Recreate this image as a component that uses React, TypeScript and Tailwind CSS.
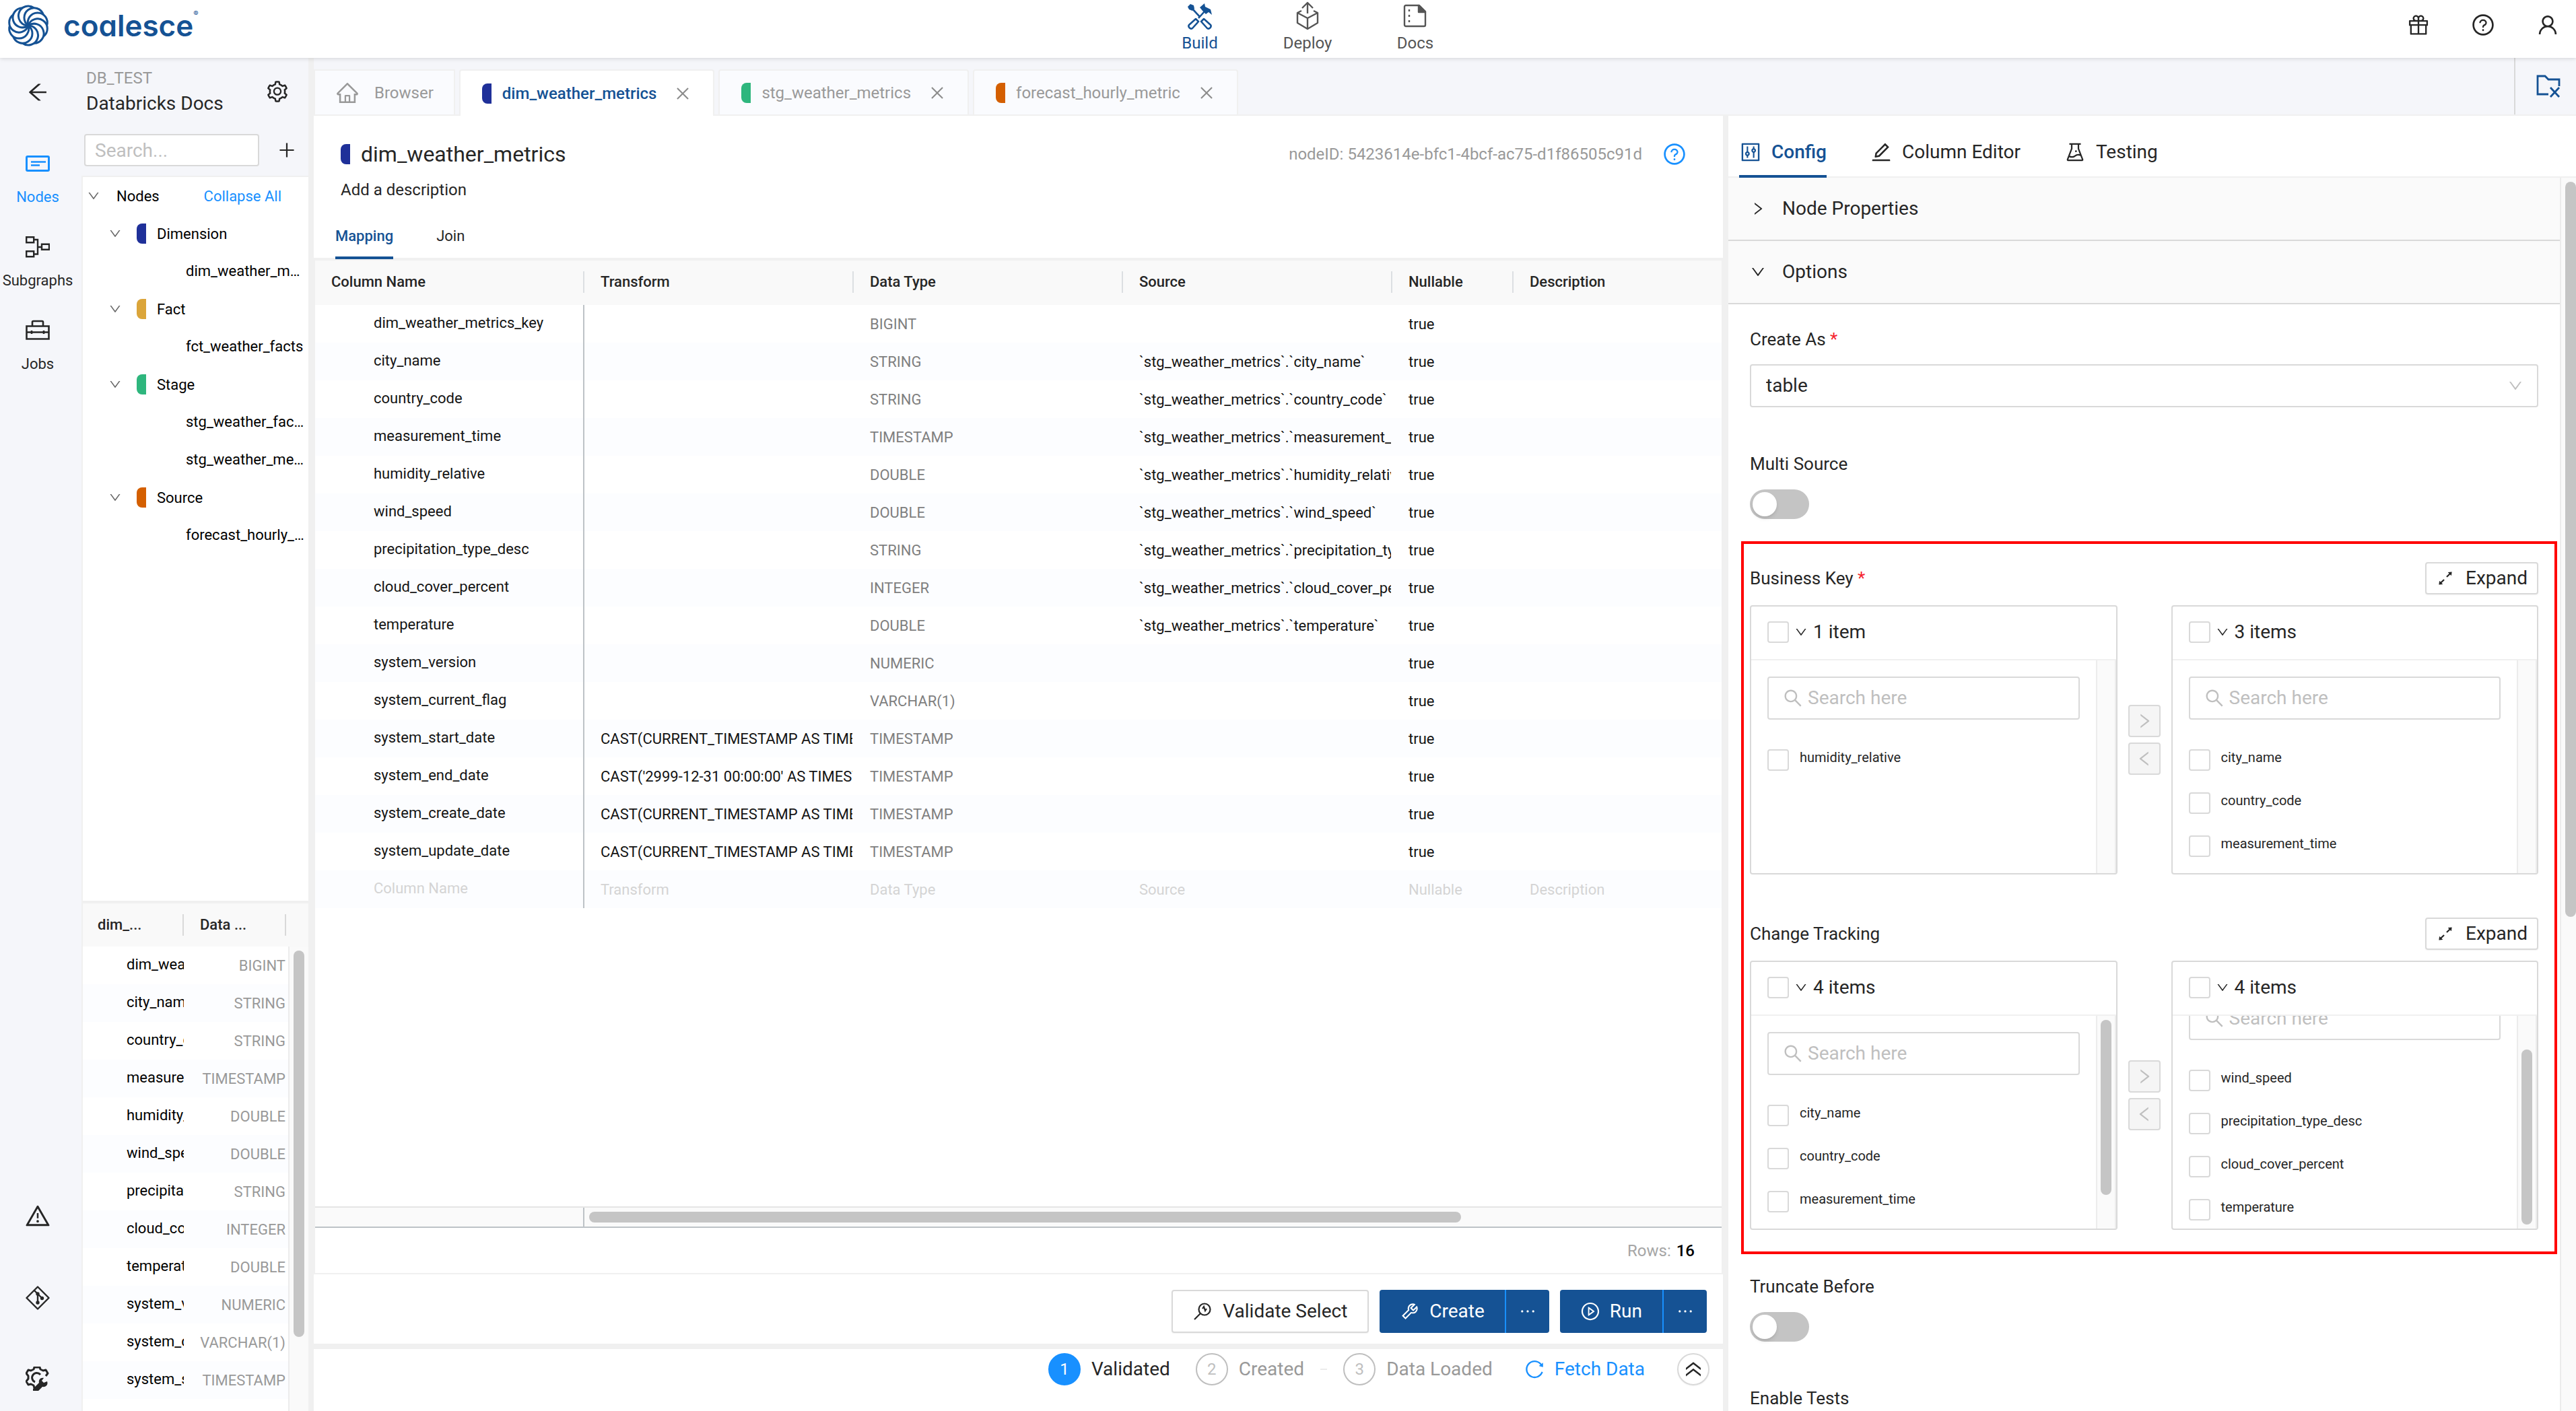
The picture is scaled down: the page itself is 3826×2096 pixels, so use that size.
import { ReactNode } from 'react'
import clsx from 'clsx'
import {
  AiOutlineArrowLeft,
  AiOutlineArrowsAlt,
  AiOutlineClose,
  AiOutlineControl,
  AiOutlineDoubleRight,
  AiOutlineDown,
  AiOutlineEdit,
  AiOutlineEllipsis,
  AiOutlineExperiment,
  AiOutlineGift,
  AiOutlineHome,
  AiOutlineLeft,
  AiOutlinePlayCircle,
  AiOutlinePlus,
  AiOutlineQuestionCircle,
  AiOutlineReload,
  AiOutlineRight,
  AiOutlineSearch,
  AiOutlineSetting,
  AiOutlineTool,
  AiOutlineUser,
  AiOutlineWarning,
} from 'react-icons/ai'

type NodeKind = 'dimension' | 'fact' | 'stage' | 'source'

const chipColors: Record<NodeKind, string> = {
  dimension: 'bg-[#1f3099]',
  fact: 'bg-[#dba53a]',
  stage: 'bg-[#2eb67d]',
  source: 'bg-[#d45f00]',
}

const tree: { kind: NodeKind; label: string; nodes: string[] }[] = [
  { kind: 'dimension', label: 'Dimension', nodes: ['dim_weather_metrics'] },
  { kind: 'fact', label: 'Fact', nodes: ['fct_weather_facts'] },
  { kind: 'stage', label: 'Stage', nodes: ['stg_weather_facts', 'stg_weather_metrics'] },
  { kind: 'source', label: 'Source', nodes: ['forecast_hourly_metric'] },
]

const stg = (name: string) => `\`stg_weather_metrics\`.\`${name}\``
const castNow = 'CAST(CURRENT_TIMESTAMP AS TIMESTAMP)'

const columns = [
  { name: 'dim_weather_metrics_key', type: 'BIGINT' },
  { name: 'city_name', type: 'STRING', source: stg('city_name') },
  { name: 'country_code', type: 'STRING', source: stg('country_code') },
  { name: 'measurement_time', type: 'TIMESTAMP', source: stg('measurement_time') },
  { name: 'humidity_relative', type: 'DOUBLE', source: stg('humidity_relative') },
  { name: 'wind_speed', type: 'DOUBLE', source: stg('wind_speed') },
  { name: 'precipitation_type_desc', type: 'STRING', source: stg('precipitation_type_desc') },
  { name: 'cloud_cover_percent', type: 'INTEGER', source: stg('cloud_cover_percent') },
  { name: 'temperature', type: 'DOUBLE', source: stg('temperature') },
  { name: 'system_version', type: 'NUMERIC' },
  { name: 'system_current_flag', type: 'VARCHAR(1)' },
  { name: 'system_start_date', type: 'TIMESTAMP', transform: castNow },
  { name: 'system_end_date', type: 'TIMESTAMP', transform: "CAST('2999-12-31 00:00:00' AS TIMESTAMP)" },
  { name: 'system_create_date', type: 'TIMESTAMP', transform: castNow },
  { name: 'system_update_date', type: 'TIMESTAMP', transform: castNow },
]

const headings = ['Column Name', 'Transform', 'Data Type', 'Source', 'Nullable', 'Description']

/* ---------- icons ---------- */

function Logo() {
  return (
    <svg viewBox="-32 -32 64 64" className="size-16" fill="none" stroke="currentColor" strokeWidth="3">
      {[0, 36, 72, 108, 144, 180, 216, 252, 288, 324].map((angle) => (
        <path key={angle} d="M0 0A14.5 14.5 0 1 1 8.52 -26.2" transform={`rotate(${angle})`} />
      ))}
    </svg>
  )
}

function BuildIcon() {
  return (
    <svg viewBox="0 0 40 40" className="size-10" fill="none" stroke="currentColor" strokeWidth="2.6" strokeLinejoin="round">
      <path d="M2 6l4-4 5 2 1 5-3 3-5-2z" fill="currentColor" stroke="none" />
      <path d="M9 9l11 12" />
      <path d="M20 7l7-6 1 5 8 4 2 8-5-4-4 3-5-5z" fill="currentColor" stroke="none" />
      <path d="M27 13L18 23" />
      <path d="M14 24l4 4-9 10c-3 2-7-2-5-5z" />
      <path d="M26 24l-4 4 9 10c3 2 7-2 5-5z" />
    </svg>
  )
}

function DeployIcon() {
  return (
    <svg viewBox="0 0 40 44" className="h-11 w-10" fill="none" stroke="currentColor" strokeWidth="2.4" strokeLinejoin="round">
      <path d="M11 14l-6 3v15l15 9 15-9V17l-6-3" />
      <path d="M5 17l15 8 15-8M20 25v16M20 18V3M12 10l8-8 8 8" />
    </svg>
  )
}

function DocsIcon() {
  return (
    <svg viewBox="0 0 36 36" className="size-9" fill="none" stroke="currentColor" strokeWidth="2.4" strokeLinejoin="round">
      <path d="M4 2h20l9 9v20a2 2 0 0 1-2 2H4a2 2 0 0 1-2-2V4a2 2 0 0 1 2-2z" />
      <path d="M23 2v10h10z" fill="currentColor" />
      <path d="M9 8v3M9 16v3M9 24v3" />
    </svg>
  )
}

function NodesIcon() {
  return (
    <svg viewBox="0 0 36 36" className="size-9" fill="none" stroke="currentColor" strokeWidth="3">
      <rect x="1.5" y="7.5" width="33" height="21" rx="1.5" />
      <path d="M8 15.5h22M8 20.5h13" strokeWidth="2.4" />
    </svg>
  )
}

function SubgraphsIcon() {
  return (
    <svg viewBox="0 0 36 36" className="size-9" fill="none" stroke="currentColor" strokeWidth="2.4">
      <path d="M1.2 3.2h11v8h-11zM1.2 24.2h11v8h-11zM24 13.8h11v8H24zM12 7h6v21.5h-6M18 18h6" />
    </svg>
  )
}

function JobsIcon() {
  return (
    <svg viewBox="0 0 36 36" className="size-9" fill="none" stroke="currentColor" strokeWidth="2.6">
      <path d="M1.5 11.5h33v19h-33zM10 11V5.500a1.500 1.500 0 0 1 1.500-1.500h13A1.500 1.500 0 0 1 26 5.500V11M2 20.500h32M9 18v5M27 18v5" />
    </svg>
  )
}

function GitIcon() {
  return (
    <svg viewBox="0 0 36 36" className="size-9" fill="none" stroke="currentColor" strokeWidth="2.4" strokeLinejoin="round">
      <path d="M18 1.5L34.5 18 18 34.5 1.5 18z" />
      <path d="M13 7l5 5v14M18 12l6 6" />
      <circle cx="18" cy="12" r="1.5" fill="currentColor" />
      <circle cx="18" cy="25" r="1.5" fill="currentColor" />
      <circle cx="24.5" cy="18.5" r="1.5" fill="currentColor" />
    </svg>
  )
}

function GearWrenchIcon() {
  return (
    <svg viewBox="0 0 36 36" className="size-9" fill="none" stroke="currentColor" strokeWidth="3" strokeLinejoin="round">
      <path d="M13 32l-1-4-4-2-4 1-3-5 3-4v-4L1 10l3-5 4 1 4-2 1-3h8l1 3 4 2 4-1 3 5-3 4" />
      <path d="M22 12a7 7 0 1 0-8 11" />
      <path
        d="M11 33l9-9c-1-4 2-8 7-7l-3 4 3 3 5-2c2 5-2 9-7 8l-6 6h-8z"
        fill="currentColor"
        stroke="none"
      />
    </svg>
  )
}

function FolderCloseIcon() {
  return (
    <svg viewBox="0 0 36 36" className="size-9" fill="none" stroke="currentColor" strokeWidth="2.8">
      <path d="M18 30H2V3h11l5 5h16v10" />
      <path d="M21 20l13 14M34 20L21 34" />
    </svg>
  )
}

function ValidateIcon() {
  return (
    <svg viewBox="0 0 28 28" className="size-7" fill="none" stroke="currentColor" strokeWidth="2.2">
      <circle cx="17" cy="11" r="8.5" />
      <path d="M11 17l-9 9M14 10l2-3 2 6 2-3" />
    </svg>
  )
}

/* ---------- small parts ---------- */

function Chip({ kind }: { kind: NodeKind }) {
  return <span className={clsx('h-[30px] w-[14px] shrink-0 rounded-l-lg', chipColors[kind])} />
}

function NavLink({ icon, label, active }: { icon: ReactNode; label: string; active?: boolean }) {
  return (
    <a
      href="#"
      className={clsx('flex w-40 flex-col items-center text-2xl leading-8', active ? 'text-[#155294]' : 'text-[#555]')}
    >
      <span className="flex h-12 items-center">{icon}</span>
      {label}
    </a>
  )
}

function RailLink({ icon, label, active }: { icon: ReactNode; label: string; active?: boolean }) {
  return (
    <a
      href="#"
      className={clsx('flex flex-col items-center gap-4 text-[22px] leading-8', active ? 'text-[#1890ff]' : 'text-[#262626]')}
    >
      {icon}
      {label}
    </a>
  )
}

function FileTab({ kind, label, active }: { kind: NodeKind; label: string; active?: boolean }) {
  return (
    <div
      className={clsx(
        'flex items-center gap-4 rounded-t-sm border-2 border-b-0 border-[#f0f0f0] px-8 text-2xl',
        active ? 'h-[69px] bg-white font-medium text-[#155294]' : 'h-[67px] bg-[#fafbfe] text-[#999]',
      )}
    >
      <button className="flex items-center gap-4">
        <Chip kind={kind} />
        {label}
      </button>
      <button aria-label={`Close ${label}`} className="ml-[10px] text-[#8c8c8c]">
        <AiOutlineClose className="size-[26px]" />
      </button>
    </div>
  )
}

function Switch({ id, label }: { id: string; label: string }) {
  return (
    <div className="flex flex-col gap-[22px]">
      <label htmlFor={id} className="text-[26px] leading-8">
        {label}
      </label>
      <input
        id={id}
        type="checkbox"
        role="switch"
        className="flex h-11 w-[88px] appearance-none items-center rounded-full bg-[#c4c4c4] px-1 before:size-9 before:rounded-full before:bg-white before:shadow-md before:content-['']"
      />
    </div>
  )
}

const checkboxClass = 'size-8 shrink-0 appearance-none rounded-sm border-2 border-[#d9d9d9] bg-white'

type ListProps = {
  title: string
  items: string[]
  scroll?: 'top' | 'bottom'
}

function TransferList({ title, items, scroll }: ListProps) {
  return (
    <div className="flex h-[400px] min-w-0 flex-1 flex-col rounded-sm border-2 border-[#d9d9d9]">
      <div className="flex h-20 shrink-0 items-center border-b-2 border-[#f0f0f0] px-6 pb-[2px]">
        <input type="checkbox" aria-label={`Select all ${title}`} className={checkboxClass} />
        <AiOutlineDown className="mx-2 size-5" />
        <span className="text-[28px] leading-8">{title}</span>
      </div>
      <div className="flex min-h-0 flex-1">
        <div className="flex-1 overflow-hidden px-6">
          <div className={scroll === 'bottom' ? '-mt-[52px]' : ''}>
            <label className="mt-6 flex h-16 items-center gap-[6px] rounded-sm border-2 border-[#d9d9d9] px-5 text-[#bfbfbf]">
              <AiOutlineSearch className="size-8 shrink-0" />
              <input
                placeholder="Search here"
                aria-label="Search here"
                className="w-full text-[28px] leading-8 placeholder:text-[#bfbfbf] focus:outline-none"
              />
            </label>
            <ul className="mt-7">
              {items.map((item) => (
                <li key={item} className="h-16">
                  <label className="flex gap-4 pt-4 text-xl leading-6">
                    <input type="checkbox" className={checkboxClass} />
                    {item}
                  </label>
                </li>
              ))}
            </ul>
          </div>
        </div>
        <div
          className={clsx(
            'flex w-[30px] justify-center border-x-2 border-[#ececec] bg-[#fafafa] py-[6px]',
            scroll === 'bottom' ? 'items-end' : 'items-start',
          )}
        >
          {scroll && <div className="h-[260px] w-4 rounded-full bg-[#c5c5c5]" />}
        </div>
      </div>
    </div>
  )
}

function Transfer({ label, required, left, right }: { label: string; required?: boolean; left: ListProps; right: ListProps }) {
  const moveClass =
    'flex size-12 items-center justify-center rounded-sm border-2 border-[#d9d9d9] bg-[#f5f5f5] text-[#bfbfbf]'

  return (
    <section className="flex flex-col gap-4">
      <div className="flex items-center justify-between">
        <h3 className="text-[26px] leading-8">
          {label} {required && <span className="text-[#f5222d]">*</span>}
        </h3>
        <button className="flex h-12 items-center gap-4 rounded-sm border-2 border-[#d9d9d9] px-[14px] text-[28px] leading-8 shadow-xs">
          <AiOutlineArrowsAlt className="size-7" />
          Expand
        </button>
      </div>
      <div className="flex items-center gap-4">
        <TransferList {...left} />
        <div className="flex flex-col gap-2">
          <button aria-label="Move right" className={moveClass}>
            <AiOutlineRight className="size-7" />
          </button>
          <button aria-label="Move left" className={moveClass}>
            <AiOutlineLeft className="size-7" />
          </button>
        </div>
        <TransferList {...right} />
      </div>
    </section>
  )
}

function Step({ number, label, active }: { number: number; label: string; active?: boolean }) {
  return (
    <li className={clsx('flex items-center gap-4', active ? 'mr-[14px] text-[#262626]' : 'text-[#999]')}>
      <span
        className={clsx(
          'flex size-12 items-center justify-center rounded-full border-2 text-2xl',
          active ? 'border-[#1890ff] bg-[#1890ff] text-white' : 'border-[#bfbfbf] text-[#bfbfbf]',
        )}
      >
        {number}
      </span>
      {label}
    </li>
  )
}

/* ---------- panels ---------- */

function Header() {
  return (
    <header className="relative z-10 grid h-[86px] shrink-0 grid-cols-[1fr_auto_1fr] bg-white shadow-[0_1px_6px_rgba(0,0,0,0.15)]">
      <a href="#" className="flex items-center gap-5 pb-[10px] pl-[10px] text-[#155294]">
        <Logo />
        <span className="flex items-start font-['Inter',sans-serif] text-[44px] leading-[52px] font-semibold [font-feature-settings:'cv11']">
          coalesce
          <span className="text-[11px] leading-4">®</span>
        </span>
      </a>
      <nav className="flex pl-[58px]">
        <NavLink icon={<BuildIcon />} label="Build" active />
        <NavLink icon={<DeployIcon />} label="Deploy" />
        <NavLink icon={<DocsIcon />} label="Docs" />
      </nav>
      <div className="flex items-center justify-end gap-[60px] pr-6 pb-3">
        <button aria-label="What's new">
          <AiOutlineGift className="size-9" />
        </button>
        <button aria-label="Help">
          <AiOutlineQuestionCircle className="size-9" />
        </button>
        <button aria-label="Account">
          <AiOutlineUser className="size-9" />
        </button>
      </div>
    </header>
  )
}

function Rail() {
  return (
    <nav className="flex w-[121px] shrink-0 flex-col items-center pt-[33px] pr-[9px] pb-[30px]">
      <button aria-label="Back" className="mb-[70px]">
        <AiOutlineArrowLeft className="size-9" />
      </button>
      <div className="flex flex-col items-center gap-10">
        <RailLink icon={<NodesIcon />} label="Nodes" active />
        <RailLink icon={<SubgraphsIcon />} label="Subgraphs" />
        <RailLink icon={<JobsIcon />} label="Jobs" />
      </div>
      <div className="mt-auto flex flex-col items-center gap-[84px]">
        <button aria-label="Problems">
          <AiOutlineWarning className="size-10" />
        </button>
        <button aria-label="Git">
          <GitIcon />
        </button>
        <button aria-label="Build settings">
          <GearWrenchIcon />
        </button>
      </div>
    </nav>
  )
}

function Sidebar() {
  return (
    <aside className="flex w-[345px] shrink-0 flex-col border-r-8 border-[#f0f0f0]">
      <div className="flex items-center justify-between pt-3 pr-7 pl-[7px]">
        <div>
          <p className="text-2xl leading-9 text-[#999]">DB_TEST</p>
          <h2 className="text-[28px] leading-10">Databricks Docs</h2>
        </div>
        <button aria-label="Workspace settings">
          <AiOutlineSetting className="size-9" />
        </button>
      </div>
      <div className="flex items-center gap-[26px] pt-[25px] pb-[14px] pl-1">
        <input
          aria-label="Search nodes"
          placeholder="Search..."
          className="h-12 w-[260px] rounded-sm border-2 border-[#d9d9d9] bg-white px-[14px] text-[28px] placeholder:text-[#bfbfbf]"
        />
        <button aria-label="Add node">
          <AiOutlinePlus className="size-[30px]" />
        </button>
      </div>

      {/* Node tree */}
      <div className="min-h-0 flex-1 overflow-hidden border-t-2 border-l-2 border-[#f0f0f0] bg-white text-[22px] text-black">
        <div className="flex h-14 items-center pr-10 pl-[6px]">
          <AiOutlineDown className="size-5 text-[#666]" />
          <span className="ml-6">Nodes</span>
          <button className="ml-auto text-[#1890ff]">Collapse All</button>
        </div>
        {tree.map((group) => (
          <div key={group.kind}>
            <div className="flex h-14 items-center pl-[38px]">
              <AiOutlineDown className="mr-[22px] size-5 text-[#666]" />
              <Chip kind={group.kind} />
              <span className="ml-4">{group.label}</span>
            </div>
            {group.nodes.map((node) => (
              <a key={node} href="#" className="block h-14 truncate pr-[6px] pl-[153px] leading-[56px]">
                {node}
              </a>
            ))}
          </div>
        ))}
      </div>

      {/* Column preview */}
      <div className="flex h-[758px] flex-col border-t-4 border-l-2 border-[#f0f0f0] bg-white text-[22px]">
        <div className="flex h-16 shrink-0 items-center bg-[#f9f9f9] font-medium">
          <span className="w-[150px] border-r-2 border-[#d9d9d9] pl-[22px] leading-8">dim_...</span>
          <span className="w-[152px] border-r-2 border-[#d9d9d9] pl-6 leading-8">Data ...</span>
        </div>
        <div className="flex min-h-0 flex-1">
          <div className="min-w-0 flex-1 overflow-hidden">
            <table className="w-full table-fixed">
              <tbody>
                {columns.slice(0, 12).map((col) => (
                  <tr key={col.name} className="h-14 even:bg-[#fcfdff]">
                    <td className="w-[150px] overflow-hidden pb-1 pl-[65px] whitespace-nowrap text-black">{col.name}</td>
                    <td className="pr-1 text-right text-[#999]">{col.type}</td>
                  </tr>
                ))}
              </tbody>
            </table>
          </div>
          <div className="flex w-[30px] justify-center border-l-2 border-[#ececec] bg-[#fafafa] pt-[6px]">
            <div className="h-[574px] w-4 rounded-full bg-[#c5c5c5]" />
          </div>
        </div>
      </div>
    </aside>
  )
}

function TabBar() {
  return (
    <div className="flex h-[86px] shrink-0 border-b-2 border-[#f0f0f0]">
      <div className="flex items-start gap-[6px] pt-[17px]">
        <button className="flex h-[67px] items-center gap-[22px] border-2 border-b-0 border-[#f0f0f0] bg-[#fafbfe] px-[30px] text-2xl text-[#999]">
          <AiOutlineHome className="size-9" />
          Browser
        </button>
        <FileTab kind="dimension" label="dim_weather_metrics" active />
        <FileTab kind="stage" label="stg_weather_metrics" />
        <FileTab kind="source" label="forecast_hourly_metric" />
      </div>
      <button
        aria-label="Close all tabs"
        className="ml-auto flex w-[92px] items-center justify-center border-l-2 border-[#d9d9d9] pl-2 text-[#155294]"
      >
        <FolderCloseIcon />
      </button>
    </div>
  )
}

function MappingTable() {
  const clipped = 'overflow-hidden border-r-2 border-transparent pt-[2px] pl-6 whitespace-nowrap'

  return (
    <table className="w-full table-fixed border-separate border-spacing-0 text-left text-[22px] leading-8">
      <colgroup>
        <col className="w-[400px]" />
        <col className="w-[400px]" />
        <col className="w-[400px]" />
        <col className="w-[400px]" />
        <col className="w-[180px]" />
        <col />
      </colgroup>
      <thead>
        <tr className="h-[66px] bg-[#f9f9f9]">
          {headings.map((heading) => (
            <th key={heading} className="pb-[2px] pl-6 font-medium">
              <div className={clsx('h-8', heading !== 'Description' && 'border-r-2 border-[#dcdfe2]')}>{heading}</div>
            </th>
          ))}
        </tr>
      </thead>
      <tbody className="text-[#141414]">
        {columns.map((col) => (
          <tr key={col.name} className="h-14 even:bg-[#fcfdff]">
            <td className="border-r-2 border-[#bdc3c7] pb-[2px] pl-[87px]">{col.name}</td>
            <td className={clipped}>{col.transform}</td>
            <td className="pt-[2px] pl-6 text-[#7f7f7f]">{col.type}</td>
            <td className={clipped}>{col.source}</td>
            <td className="pt-[2px] pl-6">true</td>
            <td />
          </tr>
        ))}
        <tr className="h-14 bg-[#fcfdff] text-[#d4d4d4]">
          {headings.map((heading, i) => (
            <td key={heading} className={i === 0 ? 'border-r-2 border-[#bdc3c7] pb-[2px] pl-[87px]' : 'pt-[2px] pl-6'}>
              {heading}
            </td>
          ))}
        </tr>
      </tbody>
    </table>
  )
}

function NodeEditor() {
  const primary = 'flex h-16 items-center bg-[#155294] text-[28px] text-white'

  return (
    <main className="flex min-w-0 flex-1 flex-col bg-white">
      <div className="flex items-center justify-between pt-[37px] pr-[54px] pl-10">
        <div className="flex items-center gap-4">
          <Chip kind="dimension" />
          <h1 className="text-[32px] leading-10">dim_weather_metrics</h1>
        </div>
        <div className="flex items-center gap-[30px] text-2xl text-[#999]">
          nodeID: 5423614e-bfc1-4bcf-ac75-d1f86505c91d
          <button aria-label="Node help" className="text-[#1890ff]">
            <AiOutlineQuestionCircle className="size-9" />
          </button>
        </div>
      </div>
      <p className="mt-[17px] pl-10 text-2xl leading-8">Add a description</p>

      <nav className="flex h-[89px] shrink-0 items-end gap-16 border-b-4 border-[#f0f0f0] pl-8 text-[22px] leading-8">
        <button className="-mb-[2px] border-b-4 border-[#155294] pb-[14px] font-medium text-[#155294]">Mapping</button>
        <button className="-mb-[2px] border-b-4 border-transparent pb-[14px]">Join</button>
      </nav>

      <div className="flex min-h-0 flex-1 flex-col border-r-2 border-l-2 border-[#f0f0f0]">
        <div className="min-h-0 flex-1 overflow-hidden">
          <MappingTable />
        </div>
        <div className="flex h-8 items-center border-t-2 border-b-2 border-t-[#e5e5e5] border-b-[#bdc3c7] bg-[#fafafa]">
          <div className="h-full w-[400px] border-r-2 border-[#bdc3c7]" />
          <div className="flex-1 pl-[7px]">
            <div className="h-4 w-[77%] rounded-full bg-[#c5c5c5]" />
          </div>
        </div>
        <div className="flex h-[69px] items-center justify-end gap-2 border-b-2 border-[#f0f0f0] pr-10 text-2xl text-[#a6a6a6]">
          Rows: <span className="font-medium text-black">16</span>
        </div>
      </div>

      {/* Actions */}
      <div className="flex h-[103px] justify-end gap-4 pt-[23px] pr-6">
        <button className="flex h-16 items-center gap-4 rounded-sm border-2 border-[#d9d9d9] px-[30px] text-[28px] shadow-xs">
          <ValidateIcon />
          Validate Select
        </button>
        <div className="flex">
          <button className={clsx(primary, 'gap-[14px] rounded-l-sm border-r-2 border-[#1890ff] px-[30px]')}>
            <AiOutlineTool className="size-[30px]" />
            Create
          </button>
          <button aria-label="More create options" className={clsx(primary, 'rounded-r-sm px-[17px]')}>
            <AiOutlineEllipsis className="size-[30px]" />
          </button>
        </div>
        <div className="flex">
          <button className={clsx(primary, 'gap-[14px] rounded-l-sm border-r-2 border-[#1890ff] px-[30px]')}>
            <AiOutlinePlayCircle className="size-[30px]" />
            Run
          </button>
          <button aria-label="More run options" className={clsx(primary, 'rounded-r-sm px-[17px]')}>
            <AiOutlineEllipsis className="size-[30px]" />
          </button>
        </div>
      </div>

      {/* Progress */}
      <div className="flex h-[100px] items-start justify-end border-t-8 border-[#f0f0f0] pt-[6px] pr-5 text-[28px]">
        <ol className="flex items-center gap-6">
          <Step number={1} label="Validated" active />
          <Step number={2} label="Created" />
          <li aria-hidden="true" className="h-[2px] w-[10px] bg-[#ebebeb]" />
          <Step number={3} label="Data Loaded" />
        </ol>
        <button className="mr-12 ml-[46px] flex h-12 items-center gap-[14px] text-[#1890ff]">
          <AiOutlineReload className="size-8" />
          Fetch Data
        </button>
        <button
          aria-label="Expand results"
          className="flex size-12 items-center justify-center rounded-full border-2 border-[#d9d9d9] shadow-xs"
        >
          <AiOutlineDoubleRight className="size-8 -rotate-90" />
        </button>
      </div>
    </main>
  )
}

function ConfigPanel() {
  const tab = '-mb-[2px] flex items-center gap-[14px] border-b-4 pb-[14px]'

  return (
    <aside className="flex w-[1267px] shrink-0 flex-col border-l-8 border-[#f0f0f0] bg-white text-[28px]">
      <nav className="flex h-[92px] shrink-0 items-end gap-16 border-b-2 border-[#f0f0f0] pl-4 leading-10">
        <button className={clsx(tab, 'border-[#155294] font-medium text-[#155294]')}>
          <AiOutlineControl className="size-[34px]" />
          Config
        </button>
        <button className={clsx(tab, 'border-transparent')}>
          <AiOutlineEdit className="size-[34px]" />
          Column Editor
        </button>
        <button className={clsx(tab, 'border-transparent')}>
          <AiOutlineExperiment className="size-[34px]" />
          Testing
        </button>
      </nav>

      <div className="flex min-h-0 flex-1">
        <div className="min-w-0 flex-1 overflow-hidden">
          <button className="flex h-[94px] w-full items-center gap-6 border-b-2 border-[#d9d9d9] bg-[#fafafa] pl-8">
            <AiOutlineRight className="size-6" />
            Node Properties
          </button>
          <button className="flex h-[94px] w-full items-center gap-6 border-b-2 border-[#d9d9d9] bg-[#fafafa] pl-8">
            <AiOutlineDown className="size-6" />
            Options
          </button>

          <div className="px-8 pt-9">
            <label htmlFor="create-as" className="block text-[26px] leading-8">
              Create As <span className="text-[#f5222d]">*</span>
            </label>
            <div className="relative mt-[21px] mb-[68px]">
              <select
                id="create-as"
                className="h-16 w-full appearance-none rounded-sm border-2 border-[#d9d9d9] bg-white px-[22px]"
              >
                <option>table</option>
                <option>view</option>
              </select>
              <AiOutlineDown className="pointer-events-none absolute top-5 right-[22px] size-6 text-[#bfbfbf]" />
            </div>

            <Switch id="multi-source" label="Multi Source" />

            {/* Highlighted key selection */}
            <div className="-mr-7 -ml-[13px] mt-[33px] mb-8 flex flex-col gap-16 border-4 border-[#ff0000] pt-[27px] pr-6 pb-8 pl-[9px]">
              <Transfer
                label="Business Key"
                required
                left={{ title: '1 item', items: ['humidity_relative'] }}
                right={{ title: '3 items', items: ['city_name', 'country_code', 'measurement_time'] }}
              />
              <Transfer
                label="Change Tracking"
                left={{
                  title: '4 items',
                  items: ['city_name', 'country_code', 'measurement_time'],
                  scroll: 'top',
                }}
                right={{
                  title: '4 items',
                  items: ['wind_speed', 'precipitation_type_desc', 'cloud_cover_percent', 'temperature'],
                  scroll: 'bottom',
                }}
              />
            </div>

            <div className="flex flex-col gap-[68px]">
              <Switch id="truncate-before" label="Truncate Before" />
              <Switch id="enable-tests" label="Enable Tests" />
            </div>
          </div>
        </div>
        <div className="flex w-6 justify-end border-l-2 border-[#ececec] bg-[#fafafa] pt-[6px]">
          <div className="h-[1092px] w-4 rounded-full bg-[#c5c5c5]" />
        </div>
      </div>
    </aside>
  )
}

export default function App() {
  return (
    <div className="flex h-screen flex-col overflow-hidden bg-[#f5f6fa] font-['Roboto',sans-serif] text-[#262626]">
      <Header />
      <div className="flex min-h-0 flex-1">
        <Rail />
        <Sidebar />
        <div className="flex min-w-0 flex-1 flex-col">
          <TabBar />
          <div className="flex min-h-0 flex-1">
            <NodeEditor />
            <ConfigPanel />
          </div>
        </div>
      </div>
    </div>
  )
}
